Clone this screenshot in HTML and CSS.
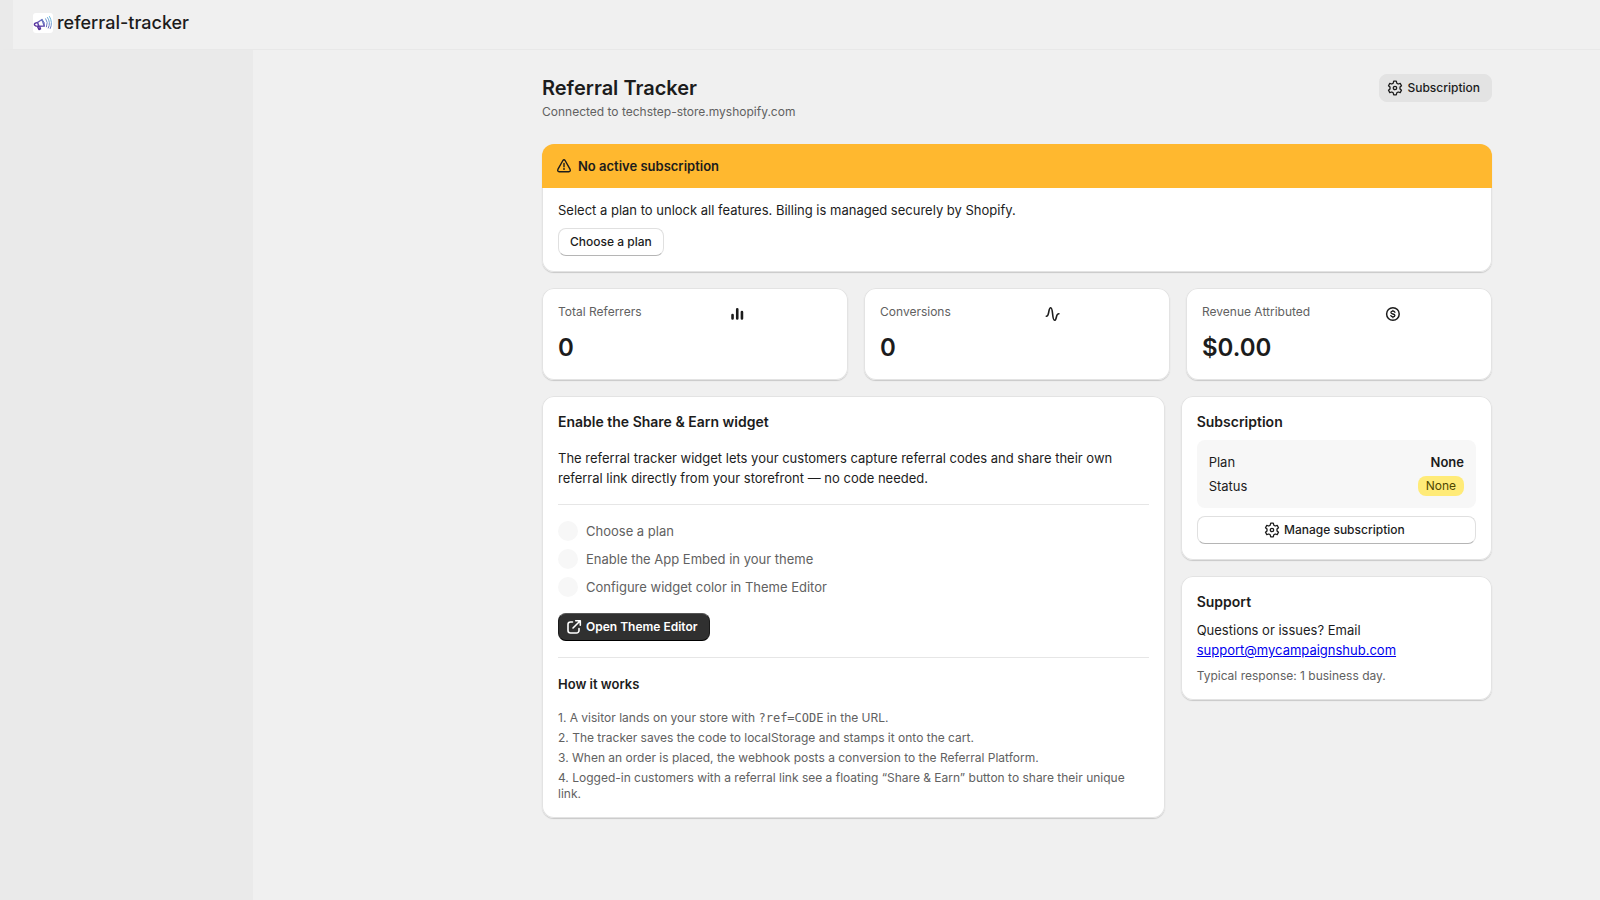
FILE: index.html
```html
<!DOCTYPE html>
<html lang="en">
<head>
    <meta charset="UTF-8">
    <meta name="viewport" content="width=device-width, initial-scale=1.0">
    <title>Referral Tracker</title>
    <link rel="stylesheet" href="styles.css">
</head>
<body>
    <svg class="sprite" aria-hidden="true">
        <symbol id="icon-gear" viewBox="0 0 16 16">
            <path d="M6.7 1.2h2.6l.5 2 1.4.8 2-.6 1.3 2.3-1.5 1.4v1.8l1.5 1.4-1.3 2.3-2-.6-1.4.8-.5 2H6.700l-.5-2-1.400-.8-2 .6-1.300-2.300 1.500-1.400V7.100L1.500 5.700l1.300-2.300 2 .6 1.400-.8z" fill="none" stroke="currentColor" stroke-width="1.300" stroke-linejoin="round"/>
            <circle cx="8" cy="8" r="1.700" fill="none" stroke="currentColor" stroke-width="1.300"/>
        </symbol>
    </svg>

    <header class="topbar">
        <svg class="logo" viewBox="0 0 20 20" aria-hidden="true">
            <defs>
                <linearGradient id="logo-fill" gradientUnits="userSpaceOnUse" x1="3" y1="16" x2="15" y2="3">
                    <stop offset="0" stop-color="#4a148c"/>
                    <stop offset=".45" stop-color="#6a5fb8"/>
                    <stop offset="1" stop-color="#6cb8dc"/>
                </linearGradient>
            </defs>
            <rect width="20" height="20" rx="3" fill="#fff"/>
            <g fill="none" stroke="url(#logo-fill)" stroke-linecap="round" stroke-linejoin="round">
                <path d="M4.500 9.500 9 6.500l2.300 6.500-5.300.2zM4.500 9.500Q1 10 1.500 12q.8 1.500 4.500 1.200M4.500 13.500l1.500 3 1.500-.6-.8-2.400" stroke-width="1.500"/>
                <path d="M9 6.500q3.500 2.500 2.300 6.500M12.700 5.800q2.800 3.500.8 8M14.500 4.500q3.500 5 .8 10.500M16.500 3.500q3.500 6 .8 12" stroke-width="1"/>
            </g>
        </svg>
        <span class="app-name">referral-tracker</span>
    </header>

    <div class="layout">
        <aside class="sidebar"></aside>

        <main class="page">
            <div class="page-header">
                <div>
                    <h1>Referral Tracker</h1>
                    <p class="subdued">Connected to techstep-store.myshopify.com</p>
                </div>
                <button type="button" class="btn btn-icon btn-tertiary">
                    <svg class="icon" aria-hidden="true"><use href="#icon-gear"/></svg>
                    Subscription
                </button>
            </div>

            <section class="card banner">
                <div class="banner-title">
                    <svg class="icon-alert" viewBox="0 0 14 14" aria-hidden="true">
                        <path d="M5.900 1.500 1 10.200q-.9 2.300 1.200 2.500h9.600q2.100-.2 1.200-2.500L8.100 1.500q-1.100-1.400-2.200 0z" fill="none" stroke="currentColor" stroke-width="1.400" stroke-linejoin="round"/>
                        <path d="M7 4.500v3.200" stroke="currentColor" stroke-width="1.400" stroke-linecap="round"/>
                        <circle cx="7" cy="10" r=".9" fill="currentColor"/>
                    </svg>
                    <h2>No active subscription</h2>
                </div>
                <div class="banner-body">
                    <p>Select a plan to unlock all features. Billing is managed securely by Shopify.</p>
                    <button type="button" class="btn">Choose a plan</button>
                </div>
            </section>

            <div class="metrics">
                <section class="card metric">
                    <div class="metric-head">
                        <span class="subdued">Total Referrers</span>
                        <svg class="metric-icon" viewBox="0 0 20 20" aria-hidden="true">
                            <path d="M5.300 11v3.500M10 5.300v9.200M14.700 8v6.500" stroke="currentColor" stroke-width="2.600" stroke-linecap="round"/>
                        </svg>
                    </div>
                    <p class="metric-value">0</p>
                </section>
                <section class="card metric">
                    <div class="metric-head">
                        <span class="subdued">Conversions</span>
                        <svg class="metric-icon" viewBox="0 0 20 20" aria-hidden="true">
                            <path d="M3.700 12.300c2 0 2-2 2.500-4.700.4-2.400.9-3.900 1.900-3.900 1.300 0 1.500 2.300 1.900 6.300s.6 6.300 1.900 6.300c1 0 1.500-1.500 1.900-3.300.4-2 .5-3.300 2.500-3.300" fill="none" stroke="currentColor" stroke-width="1.600" stroke-linecap="round"/>
                        </svg>
                    </div>
                    <p class="metric-value">0</p>
                </section>
                <section class="card metric">
                    <div class="metric-head">
                        <span class="subdued">Revenue Attributed</span>
                        <svg class="metric-icon" viewBox="0 0 20 20" aria-hidden="true">
                            <g fill="none" stroke="currentColor" stroke-width="1.500" stroke-linecap="round">
                                <circle cx="10" cy="10" r="6.300"/>
                                <path d="M12 8.300c-.3-.7-1-1.100-2-1.100-1.200 0-2 .5-2 1.300 0 2 4 1 4 3 0 .8-.8 1.300-2 1.300-1 0-1.800-.4-2.100-1.200M10 6.300v.9M10 12.800v.9" stroke-width="1.300"/>
                            </g>
                        </svg>
                    </div>
                    <p class="metric-value">$0.00</p>
                </section>
            </div>

            <div class="columns">
                <section class="card setup">
                    <h2>Enable the Share &amp; Earn widget</h2>
                    <p>The referral tracker widget lets your customers capture referral codes and share their own referral link directly from your storefront — no code needed.</p>
                    <hr>
                    <ul class="steps">
                        <li>Choose a plan</li>
                        <li>Enable the App Embed in your theme</li>
                        <li>Configure widget color in Theme Editor</li>
                    </ul>
                    <button type="button" class="btn btn-icon btn-primary">
                        <svg class="icon" viewBox="0 0 16 16" aria-hidden="true">
                            <path d="M6.500 3H4.500A2.500 2.500 0 0 0 2 5.500v6A2.500 2.500 0 0 0 4.500 14h6a2.500 2.500 0 0 0 2.500-2.500V9.500M9.700 1.700h4.600v4.600M14 2 7 9" fill="none" stroke="currentColor" stroke-width="1.600" stroke-linecap="round" stroke-linejoin="round"/>
                        </svg>
                        Open Theme Editor
                    </button>
                    <hr>
                    <h3>How it works</h3>
                    <div class="how-list subdued">
                        <p>1. A visitor lands on your store with <code>?ref=CODE</code> in the URL.</p>
                        <p>2. The tracker saves the code to localStorage and stamps it onto the cart.</p>
                        <p>3. When an order is placed, the webhook posts a conversion to the Referral Platform.</p>
                        <p>4. Logged-in customers with a referral link see a floating “Share &amp; Earn” button to share their unique link.</p>
                    </div>
                </section>

                <div class="side">
                    <section class="card side-card">
                        <h2>Subscription</h2>
                        <div class="plan-box">
                            <div class="plan-row"><span>Plan</span><strong>None</strong></div>
                            <div class="plan-row"><span>Status</span><span class="badge">None</span></div>
                        </div>
                        <button type="button" class="btn btn-icon">
                            <svg class="icon" aria-hidden="true"><use href="#icon-gear"/></svg>
                            Manage subscription
                        </button>
                    </section>
                    <section class="card side-card">
                        <h2>Support</h2>
                        <p>Questions or issues? Email <a href="mailto:support@mycampaignshub.com">support@mycampaignshub.com</a></p>
                        <p class="subdued">Typical response: 1 business day.</p>
                    </section>
                </div>
            </div>
        </main>
    </div>
</body>
</html>
```
FILE: styles.css
```css
* {
    box-sizing: border-box;
}
body {
    margin: 0;
    min-height: 100vh;
    display: flex;
    flex-direction: column;
    background: #f0f0f0;
    color: #1c1c1c;
    font-family: Inter, "Liberation Sans", sans-serif;
    font-size: 13px;
    line-height: 20px;
}
h1, h2, h3, p, ul {
    margin: 0;
    padding: 0;
}
h1 {
    font-size: 20px;
    line-height: 24px;
    font-weight: 600;
}
h2 {
    font-size: 14px;
    font-weight: 600;
}
h3 {
    font-size: 13px;
    font-weight: 600;
}
hr {
    width: 100%;
    margin: 0;
    border: 0;
    border-top: 1px solid #e6e6e6;
}
.sprite {
    display: none;
}

/* Top bar */
.topbar {
    display: flex;
    align-items: center;
    gap: 4px;
    height: 50px;
    padding: 0 20px 3px;
    border-left: 13px solid #eaeaea;
    border-bottom: 1px solid #e8e8e8;
}
.logo {
    width: 20px;
    height: 20px;
}
.app-name {
    font-size: 18px;
    font-weight: 500;
}

.layout {
    flex: 1;
    display: flex;
}
.sidebar {
    flex: 0 0 253px;
    background: #eaeaea;
}
.page {
    flex: 0 1 950px;
    display: flex;
    flex-direction: column;
    gap: 16px;
    margin: 0 108px 48px auto;
    padding-top: 24px;
}
.page-header {
    display: flex;
    justify-content: space-between;
    align-items: flex-start;
    padding-bottom: 8px;
}
.page-header h1 {
    padding: 2px 0 4px;
}
.subdued {
    color: #616161;
    font-size: 12px;
    line-height: 16px;
}

/* Buttons */
.btn {
    display: inline-flex;
    align-items: center;
    justify-content: center;
    gap: 4px;
    height: 28px;
    padding: 0 11px;
    border: 1px solid #e0e0e0;
    border-bottom-color: #b5b5b5;
    border-radius: 8px;
    background: #fff;
    color: #1c1c1c;
    font-family: inherit;
    font-size: 12px;
    font-weight: 500;
    line-height: 16px;
    cursor: pointer;
}
.btn:hover {
    background: #fafafa;
}
.btn-icon {
    padding-left: 7px;
}
.btn-tertiary {
    border-color: #e3e3e3;
    background: #e3e3e3;
}
.btn-primary {
    align-self: flex-start;
    border-color: #1a1a1a;
    border-top-color: #555;
    border-bottom-color: #000;
    background: #303030;
    color: #fff;
    font-weight: 600;
}
.btn-primary:hover {
    background: #1a1a1a;
}
.icon {
    width: 16px;
    height: 16px;
}

/* Cards */
.card {
    background: #fff;
    border-radius: 12px;
    box-shadow: inset 0 0 0 1px #e3e3e3, 0 1px 1px #c8c8c8;
}
.banner-title {
    display: flex;
    align-items: center;
    gap: 7px;
    padding: 12px 15px;
    border-radius: 12px 12px 0 0;
    background: #ffb82f;
}
.banner-title h2 {
    font-size: 13px;
}
.icon-alert {
    width: 14px;
    height: 14px;
}
.banner-body {
    display: flex;
    flex-direction: column;
    align-items: flex-start;
    gap: 8px;
    padding: 12px 16px 16px;
}

.metrics {
    display: grid;
    grid-template-columns: repeat(3, 1fr);
    gap: 16px;
}
.metric {
    padding: 16px;
}
.metric-head {
    display: flex;
}
.metric-icon {
    flex: 1;
    height: 20px;
}
.metric-value {
    padding-top: 8px;
    font-size: 24px;
    line-height: 32px;
    font-weight: 600;
}

.columns {
    display: grid;
    grid-template-columns: 2fr 1fr;
    gap: 16px;
    align-items: start;
}
.setup {
    display: flex;
    flex-direction: column;
    gap: 16px;
    padding: 16px;
}
.steps {
    display: flex;
    flex-direction: column;
    gap: 8px;
    list-style: none;
    color: #616161;
}
.steps li {
    display: flex;
    gap: 8px;
}
.steps li::before {
    content: "";
    width: 20px;
    height: 20px;
    border-radius: 50%;
    background: #f7f7f7;
}
.how-list {
    display: flex;
    flex-direction: column;
    gap: 4px;
}
code {
    font-family: "DejaVu Sans Mono", monospace;
    font-size: 12px;
    line-height: 1;
}

.side {
    display: flex;
    flex-direction: column;
    gap: 16px;
}
.side-card {
    display: flex;
    flex-direction: column;
    gap: 8px;
    padding: 16px;
}
.plan-box {
    display: flex;
    flex-direction: column;
    gap: 4px;
    padding: 12px;
    border-radius: 8px;
    background: #f7f7f7;
}
.plan-row {
    display: flex;
    justify-content: space-between;
}
.plan-row strong {
    font-weight: 600;
}
.badge {
    padding: 0 8px;
    border-radius: 8px;
    background: #ffeb78;
    color: #4f4700;
    font-size: 12px;
}
a {
    color: #0000ee;
}
```
